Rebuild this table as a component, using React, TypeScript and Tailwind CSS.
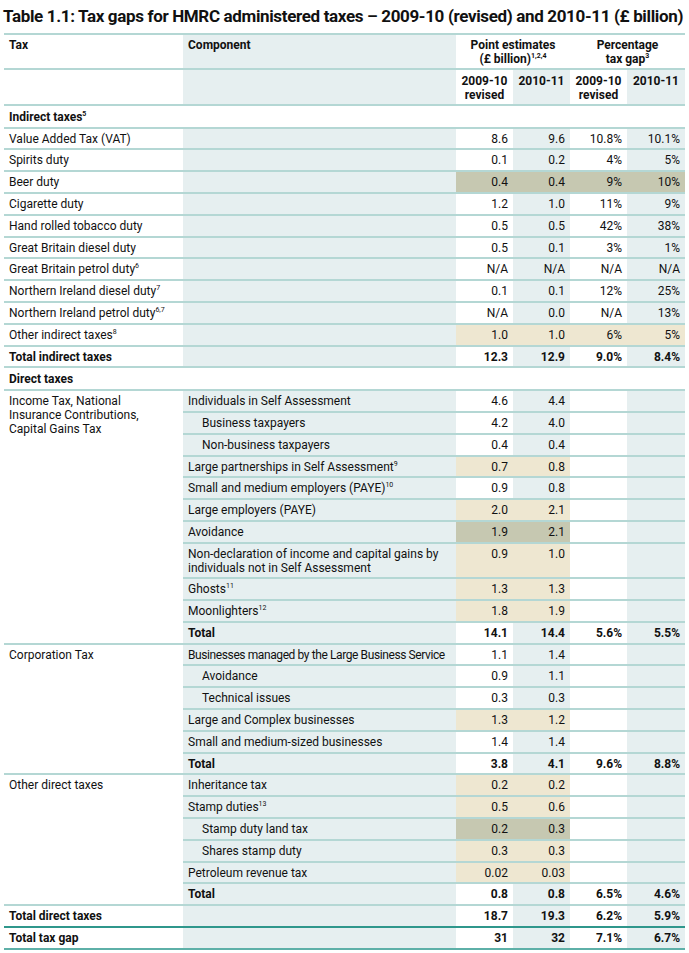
import React from "react";

type Hl = "tan" | "olive" | undefined;

const FONT = { fontFamily: "Roboto, 'Liberation Sans', sans-serif" };

function Sup({ t }: { t: string }) {
  return <span className="relative -top-[5px] text-[7px] leading-none">{t}</span>;
}

function hlBg(hl: Hl) {
  return hl === "tan" ? "bg-[#eee7d1]" : "bg-[#c6c8b1]";
}

function Nums({ v, hl, hlCount = 4, bold }: { v: string[]; hl?: Hl; hlCount?: number; bold?: boolean }) {
  const widths = ["w-[57px]", "w-[57px]", "w-[57px]", "w-[58px]"];
  return (
    <>
      {[0, 1, 2, 3].map((i) => {
        let bg = i % 2 === 1 ? "bg-[#e6eff0]" : "bg-white";
        if (hl && i < hlCount) bg = hlBg(hl);
        return (
          <div key={i} className={`${widths[i]} ${bg} shrink-0 pr-[5px] pt-[3px] text-right leading-[14px] ${bold ? "font-bold" : ""}`}>
            {v[i] ?? ""}
          </div>
        );
      })}
    </>
  );
}

type SimpleRow = { label: React.ReactNode; v: string[]; hl?: Hl; bold?: boolean };

function Simple({ r, border = "border-[#b4d7d4]" }: { r: SimpleRow; border?: string }) {
  return (
    <div className={`flex h-[21.8px] border-b-2 ${border}`}>
      <div className={`w-[179px] shrink-0 bg-white pl-[5px] pt-[3px] leading-[14px] ${r.bold ? "font-bold" : ""}`}>{r.label}</div>
      <div className="w-[273px] shrink-0 bg-[#e6eff0]" />
      <Nums v={r.v} hl={r.hl} bold={r.bold} />
    </div>
  );
}

type SubRow = { label: React.ReactNode; v: string[]; hl?: Hl; indent?: boolean; bold?: boolean; double?: boolean };

function Group({ tax, rows }: { tax: React.ReactNode; rows: SubRow[] }) {
  return (
    <div className="flex">
      <div className="w-[179px] shrink-0 border-b-2 border-[#b4d7d4] bg-white pl-[5px] pt-[3px] leading-[14px]">{tax}</div>
      <div className="flex flex-col">
        {rows.map((r, i) => (
          <div key={i} className={`flex border-b-2 border-[#b4d7d4] ${r.double ? "h-[35.5px]" : "h-[21.8px]"}`}>
            <div className={`w-[273px] shrink-0 overflow-hidden whitespace-nowrap bg-[#e6eff0] pt-[3px] leading-[14px] ${r.indent ? "pl-[19px]" : "pl-[5px]"} ${r.bold ? "font-bold" : ""}`}>
              {r.label}
            </div>
            <Nums v={r.v} hl={r.hl} hlCount={2} bold={r.bold} />
          </div>
        ))}
      </div>
    </div>
  );
}

function Section({ label }: { label: React.ReactNode }) {
  return (
    <div className="h-[22.7px] border-b-2 border-[#b4d7d4] bg-white pl-[5px] pt-[4px] font-bold leading-[14px]">
      <span>{label}</span>
    </div>
  );
}

export default function App() {
  const indirect: SimpleRow[] = [
    { label: "Value Added Tax (VAT)", v: ["8.6", "9.6", "10.8%", "10.1%"] },
    { label: "Spirits duty", v: ["0.1", "0.2", "4%", "5%"] },
    { label: "Beer duty", v: ["0.4", "0.4", "9%", "10%"], hl: "olive" },
    { label: "Cigarette duty", v: ["1.2", "1.0", "11%", "9%"] },
    { label: "Hand rolled tobacco duty", v: ["0.5", "0.5", "42%", "38%"] },
    { label: "Great Britain diesel duty", v: ["0.5", "0.1", "3%", "1%"] },
    { label: <>Great Britain petrol duty<Sup t="6" /></>, v: ["N/A", "N/A", "N/A", "N/A"] },
    { label: <>Northern Ireland diesel duty<Sup t="7" /></>, v: ["0.1", "0.1", "12%", "25%"] },
    { label: <>Northern Ireland petrol duty<Sup t="6,7" /></>, v: ["N/A", "0.0", "N/A", "13%"] },
    { label: <>Other indirect taxes<Sup t="8" /></>, v: ["1.0", "1.0", "6%", "5%"], hl: "tan" },
    { label: "Total indirect taxes", v: ["12.3", "12.9", "9.0%", "8.4%"], bold: true },
  ];

  const income: SubRow[] = [
    { label: "Individuals in Self Assessment", v: ["4.6", "4.4"] },
    { label: "Business taxpayers", v: ["4.2", "4.0"], indent: true },
    { label: "Non-business taxpayers", v: ["0.4", "0.4"], indent: true },
    { label: <>Large partnerships in Self Assessment<Sup t="9" /></>, v: ["0.7", "0.8"], hl: "tan" },
    { label: <>Small and medium employers (PAYE)<Sup t="10" /></>, v: ["0.9", "0.8"] },
    { label: "Large employers (PAYE)", v: ["2.0", "2.1"], hl: "tan" },
    { label: "Avoidance", v: ["1.9", "2.1"], hl: "olive" },
    {
      label: (
        <>
          Non-declaration of income and capital gains by
          <br />
          individuals not in Self Assessment
        </>
      ),
      v: ["0.9", "1.0"],
      hl: "tan",
      double: true,
    },
    { label: <>Ghosts<Sup t="11" /></>, v: ["1.3", "1.3"], hl: "tan" },
    { label: <>Moonlighters<Sup t="12" /></>, v: ["1.8", "1.9"], hl: "tan" },
    { label: "Total", v: ["14.1", "14.4", "5.6%", "5.5%"], bold: true },
  ];

  const corp: SubRow[] = [
    { label: <span className="tracking-[-0.4px]">Businesses managed by the Large Business Service</span>, v: ["1.1", "1.4"] },
    { label: "Avoidance", v: ["0.9", "1.1"], indent: true },
    { label: "Technical issues", v: ["0.3", "0.3"], indent: true },
    { label: "Large and Complex businesses", v: ["1.3", "1.2"], hl: "tan" },
    { label: "Small and medium-sized businesses", v: ["1.4", "1.4"] },
    { label: "Total", v: ["3.8", "4.1", "9.6%", "8.8%"], bold: true },
  ];

  const other: SubRow[] = [
    { label: "Inheritance tax", v: ["0.2", "0.2"], hl: "tan" },
    { label: <>Stamp duties<Sup t="13" /></>, v: ["0.5", "0.6"], hl: "tan" },
    { label: "Stamp duty land tax", v: ["0.2", "0.3"], hl: "olive", indent: true },
    { label: "Shares stamp duty", v: ["0.3", "0.3"], hl: "tan", indent: true },
    { label: "Petroleum revenue tax", v: ["0.02", "0.03"], hl: "tan" },
    { label: "Total", v: ["0.8", "0.8", "6.5%", "4.6%"], bold: true },
  ];

  return (
    <div className="min-h-[953px] w-[689px] bg-white text-[12px] text-[#111]" style={FONT}>
      <div className="ml-[4px] w-[681px]">
        <div className="-ml-[1px] h-[33px] whitespace-nowrap pt-[5px] text-[17px] font-bold leading-[22px] tracking-[-0.35px]">
          Table 1.1: Tax gaps for HMRC administered taxes – 2009-10 (revised) and 2010-11 (£ billion)
        </div>
        <div className="border-t-2 border-[#b4d7d4]">
          {/* Header row 1 */}
          <div className="flex h-[35px] border-b-2 border-[#b4d7d4] font-bold leading-[14px]">
            <div className="w-[179px] shrink-0 bg-white pl-[5px] pt-[3px]">Tax</div>
            <div className="w-[273px] shrink-0 bg-[#e6eff0] pl-[5px] pt-[3px]">Component</div>
            <div className="w-[114px] shrink-0 bg-white pt-[3px] text-center">
              Point estimates
              <br />
              (£ billion)<Sup t="1,2,4" />
            </div>
            <div className="w-[115px] shrink-0 bg-white pt-[3px] text-center">
              Percentage
              <br />
              tax gap<Sup t="3" />
            </div>
          </div>
          {/* Header row 2 */}
          <div className="flex h-[36px] border-b-2 border-[#b4d7d4] font-bold leading-[14px]">
            <div className="w-[179px] shrink-0 bg-white" />
            <div className="w-[273px] shrink-0 bg-[#e6eff0]" />
            <div className="w-[57px] shrink-0 bg-white pt-[4px] text-center">
              2009-10
              <br />
              revised
            </div>
            <div className="w-[57px] shrink-0 bg-[#e6eff0] pt-[4px] text-center">2010-11</div>
            <div className="w-[57px] shrink-0 bg-white pt-[4px] text-center">
              2009-10
              <br />
              revised
            </div>
            <div className="w-[58px] shrink-0 bg-[#e6eff0] pt-[4px] text-center">2010-11</div>
          </div>

          <Section label={<>Indirect taxes<Sup t="5" /></>} />
          {indirect.map((r, i) => (
            <Simple key={i} r={r} />
          ))}
          <Section label="Direct taxes" />
          <Group
            tax={
              <>
                Income Tax, National
                <br />
                Insurance Contributions,
                <br />
                Capital Gains Tax
              </>
            }
            rows={income}
          />
          <Group tax="Corporation Tax" rows={corp} />
          <Group tax="Other direct taxes" rows={other} />
          <Simple r={{ label: "Total direct taxes", v: ["18.7", "19.3", "6.2%", "5.9%"], bold: true }} border="border-[#2f978c]" />
          <Simple r={{ label: "Total tax gap", v: ["31", "32", "7.1%", "6.7%"], bold: true }} border="border-[#5eb0a8]" />
        </div>
      </div>
    </div>
  );
}
